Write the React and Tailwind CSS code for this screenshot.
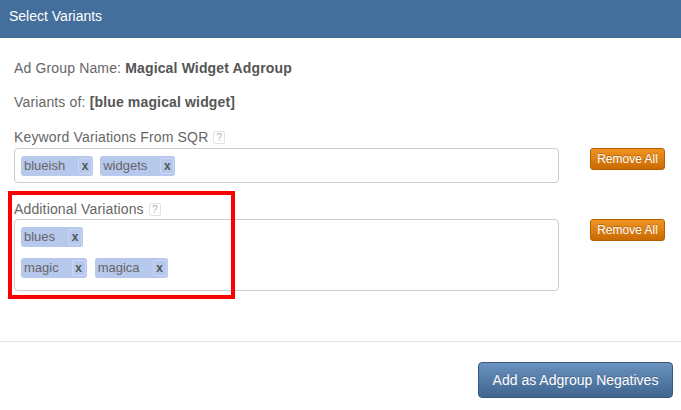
import React from "react";

function Help() {
  return (
    <span className="ml-[5px] mt-[4px] inline-flex h-[13px] w-[12px] items-center justify-center rounded-[2px] border border-[#e3e3e3] text-[10px] leading-none text-[#b0b0b0]">
      ?
    </span>
  );
}

function Tag({ label }) {
  return (
    <span className="inline-flex h-[20px] items-center rounded-[3px] bg-[#b7c8ed] pl-[3px] pr-[1px] text-[13px] text-[#666]">
      <span>{label}</span>
      <span className="ml-[13px] inline-flex h-[16px] w-[14px] items-center justify-center rounded-[2px] border border-[#cbd7f2] text-[12px] font-bold leading-none text-[#555]">
        x
      </span>
    </span>
  );
}

function RemoveAll() {
  return (
    <button className="ml-[31px] h-[22px] w-[75px] rounded-[3px] border border-[#b45f02] bg-gradient-to-b from-[#f29420] to-[#c96b03] text-[12px] leading-none text-white [text-shadow:0_-1px_0_rgba(0,0,0,0.25)]">
      Remove All
    </button>
  );
}

export default function App() {
  return (
    <div
      className="relative h-[410px] w-[681px] overflow-hidden bg-white text-[#666]"
      style={{ fontFamily: '"Liberation Sans", Arial, sans-serif' }}
    >
      <div className="h-[38px] bg-[#446e9b] pl-[9px] pt-[6px] text-[14px] leading-[20px] text-white">
        Select Variants
      </div>

      <div className="pl-[14px] tracking-[0.15px]">
        <div className="mt-[20px] text-[14px] leading-[20px]">
          Ad Group Name: <span className="font-bold text-[#555]">Magical Widget Adgroup</span>
        </div>
        <div className="mt-[14px] text-[14px] leading-[20px]">
          Variants of: <span className="font-bold text-[#555]">[blue magical widget]</span>
        </div>

        <div className="mt-[15px] flex items-start text-[14px] leading-[20px]">
          <span>Keyword Variations From SQR</span>
          <Help />
        </div>
        <div className="mt-[1px] flex items-start tracking-normal">
          <div className="flex h-[35px] w-[545px] flex-wrap gap-[7px] rounded-[4px] border border-[#cccccc] pl-[6px] pt-[7px]">
            <Tag label="blueish" />
            <Tag label="widgets" />
          </div>
          <RemoveAll />
        </div>

        <div className="mt-[16px] flex items-start text-[14px] leading-[20px]">
          <span>Additional Variations</span>
          <Help />
        </div>
        <div className="flex items-start tracking-normal">
          <div className="flex h-[72px] w-[545px] flex-col gap-[11px] rounded-[4px] border border-[#cccccc] pl-[6px] pt-[7px]">
            <div className="flex gap-[7px]">
              <Tag label="blues" />
            </div>
            <div className="flex gap-[8px]">
              <Tag label="magic" />
              <Tag label="magica" />
            </div>
          </div>
          <RemoveAll />
        </div>
      </div>

      <div className="mt-[50px] border-t border-[#e5e5e5]" />

      <div className="flex justify-end pr-[8px] pt-[20px]">
        <button className="h-[36px] w-[195px] rounded-[4px] border border-[#36597f] bg-gradient-to-b from-[#6b92bf] to-[#3f6590] text-[14px] text-white [text-shadow:0_-1px_0_rgba(0,0,0,0.2)]">
          Add as Adgroup Negatives
        </button>
      </div>

      <div className="pointer-events-none absolute left-[8px] top-[191px] h-[108px] w-[227px] border-[4px] border-[#ff0000]" />
    </div>
  );
}
